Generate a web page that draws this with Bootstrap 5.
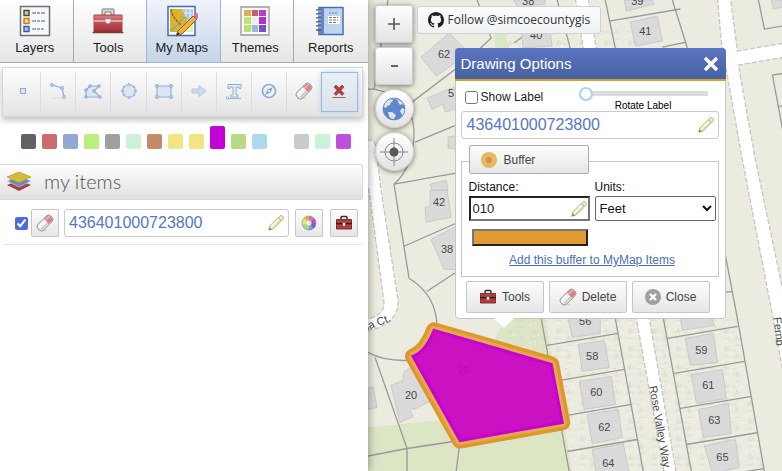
<!DOCTYPE html>
<html lang="en">
<head>
<meta charset="utf-8">
<meta name="viewport" content="width=device-width, initial-scale=1">
<title>My Maps</title>
<link href="https://cdn.jsdelivr.net/npm/bootstrap@5.3.0/dist/css/bootstrap.min.css" rel="stylesheet">
<style>
body{font-family:"Liberation Sans",Arial,sans-serif;font-size:12px;line-height:16px;color:#222;background:#fff}
button,input,select{font-family:inherit}
.side-panel{width:47%;max-width:368px;background:#fff;box-shadow:1px 0 8px rgba(0,0,0,.35);z-index:2}
.main-tabs{display:grid;grid-template-columns:repeat(5,1fr)}
.main-tab{height:63px;border:0;border-right:1px solid #a9a9a9;border-bottom:1px solid #a9a9a9;background:linear-gradient(#fefefe,#e6e6e6);font-size:13px;line-height:16px;color:#1c1c1c;padding:0 3px 2px 0}
.main-tab:last-child{border-right:0;padding-right:0}
.main-tab svg{display:block;margin:0 auto 3px;width:32px;height:32px}
.main-tab.is-on{background:linear-gradient(#eff4fc,#c5d4e7);border-color:#9db6da;box-shadow:-1px 0 #9db6da}
.draw-bar{height:50px;margin:4px 5px 0 2px;padding:4px 4px 4px 3px;border:1px solid #d6d6d6;background:linear-gradient(#fdfdfd,#e3e4e3);box-shadow:0 3px 6px rgba(0,0,0,.25)}
.draw-bar button{flex:1 1 0;border:0;border-right:1px solid #dcdedd;background:none;padding:0 0 2px}
.draw-bar button:nth-child(9){border-right:0}
.draw-bar button.is-on{border:1px solid #9bb9e4;background:linear-gradient(#e8eff8,#dce2e8);box-shadow:0 0 5px #b9cdea}
.draw-bar svg{width:20px;height:20px}
.swatches{height:47px;gap:6px;padding:0 0 15px 21px}
.swatch{width:15px;height:15px;border:0;border-radius:2px;padding:0}
.swatch.is-on{height:23px}
.items-head{height:36px;margin-right:5px;padding:0 0 3px 6px;gap:12px;border:1px solid #d8d8d8;border-left:0;border-radius:0 3px 3px 0;background:linear-gradient(#fefefe,#dfe0df)}
.items-head h1{font:300 20px/24px Lato,sans-serif;color:#555;margin:0}
.item-row{margin:0 6px 0 4px;padding:9px 4px 7px 11px;gap:3px;border-bottom:1px solid #e8e8e8}
.tick{width:13px;height:13px;margin:0;accent-color:#4c6de0;flex:none}
.soft-btn{border:1px solid #c4c6c7;border-radius:2px;background:linear-gradient(#fdfdfd,#e5e6e5);color:#444;padding:0;display:flex;align-items:center;justify-content:center}
.mini-btn{width:28px;height:28px;flex:none}
.field{border:1px solid #c9cbcc;border-radius:3px;background:#fff;display:flex;align-items:center;padding:0 4px 0 5px;height:28px}
.item-row .field{margin:0 3px 0 2px;padding-left:4px}
.field input{border:0;outline:0;padding:0;flex:1;min-width:0;width:0;font-size:16px;line-height:20px;color:#5578c0;background:none}
.map{position:relative;flex:1;min-width:0;background:#ecebdf;overflow:hidden}
.map-art{position:absolute;inset:0;width:100%;height:100%}
.map-controls{position:absolute;left:7px;top:5px}
.zoom-btn{width:38px;height:38px;border:1px solid #ccc;border-radius:3px;background:linear-gradient(#fff,#e2e2e2);box-shadow:0 1px 5px rgba(0,0,0,.5);padding:0}
.zoom-btn svg,.round-btn svg{display:block;margin:auto}
.round-btn{width:39px;height:39px;border:1px solid #ccc;border-radius:50%;background:linear-gradient(#fff,#e2e2e2);box-shadow:0 1px 5px rgba(0,0,0,.5);padding:0}
.follow{position:absolute;left:49px;top:6px;height:28px;padding:0 10px;gap:4px;border:1px solid #cfd3d6;border-radius:3px;background:linear-gradient(#fcfcfc,#eff1f4);color:#333;text-decoration:none;font:500 12px/20px "Open Sans",sans-serif}
.popup{position:absolute;left:87px;top:48px;width:271px;background:#fff;border:1px solid #c6c6c6;border-radius:4px;z-index:1}
.popup:after{content:"";position:absolute;left:38px;top:100%;border:10px solid transparent;border-top-color:#fff;border-bottom:0}
.popup-head{height:33px;margin:-1px -1px 0;padding:0 7px 0 6px;border-radius:4px 4px 0 0;background:linear-gradient(#5a74c4,#47619f);border-bottom:2px solid #d3a02d;color:#fff}
.popup-head h2{font-size:15px;line-height:20px;margin:0;font-weight:400}
.popup-head button{border:0;background:none;padding:0;line-height:0}
.popup-body{padding:6px 6px 5px 5px}
.show-row{padding:2px 0 0 4px;gap:3px}
.rotate{width:129px;margin-right:11px}
.rotate input{appearance:none;display:block;width:100%;height:14px;margin:0;background:linear-gradient(#dcdcdc,#dcdcdc) 6px 4px/100% 5px no-repeat}
.rotate input::-webkit-slider-thumb{appearance:none;width:14px;height:14px;border:2px solid #a9d5e8;border-radius:50%;background:#fff}
.rotate label{font-size:10px;line-height:10px;color:#000}
.buffer-box{border:1px solid #c4c6c7;margin-top:22px;padding:0 2px 0 7px;height:116px}
.buffer-btn{width:120px;height:29px;margin-top:-17px;border-color:#aaacad;justify-content:flex-start;padding-left:10px;gap:6px;font-size:12px}
.pair{display:grid;grid-template-columns:121px 1fr;column-gap:5px;margin-top:4px}
.pair label{line-height:18px;color:#111}
.dist{height:25px;border:2px solid #777;border-top-color:#222;border-left-color:#222;display:flex;align-items:center;padding:0 1px 0 2px}
.dist input{border:0;outline:0;padding:0;flex:1;width:0;min-width:0;font-size:13px;line-height:18px;color:#222}
.unit{height:25px;border:1px solid #666;border-radius:2px;background:#fff;font-size:13px;line-height:20px;padding:0;width:100%;color:#111}
.hue{display:block;width:116px;height:17px;margin:8px 0 0 3px;padding:0;border:2px solid #222;border-top-color:#777;border-left-color:#777;background:#e39b31}
.add-link{display:block;text-align:center;margin-top:6px;color:#4a6fb5}
.acts{display:grid;grid-template-columns:repeat(3,78px);gap:5px;margin:4px 0 0 5px}
.acts button{height:32px;gap:5px;font-size:12px;line-height:16px}
</style>
<script src="https://cdn.jsdelivr.net/npm/bootstrap@5.3.0/dist/js/bootstrap.bundle.min.js"></script>
</head>
<body>
<svg width="0" height="0" class="position-absolute" aria-hidden="true">
<defs>
<linearGradient id="gr" x1="0" y1="0" x2="0" y2="1"><stop offset="0" stop-color="#d98087"/><stop offset=".5" stop-color="#ba4b52"/><stop offset="1" stop-color="#a93439"/></linearGradient>
</defs>
<symbol id="i-box" viewBox="0 0 32 32"><path d="M10 10V5q0-1 1-1h10q1 0 1 1v5h-3V7h-6v3z" fill="#d8dada" stroke="#777"/><path d="M2 10h28v16H2z" fill="url(#gr)" stroke="#a84047"/><path d="M1 15h30v2H1z" fill="#e6a5a8"/><path d="M0 28l3-3h26l3 3z" fill="#8d3437"/><path d="M1 28.500h30" stroke="#c9c9c9"/><path d="M13 14h6v3l-3 2-3-2z" fill="#eee" stroke="#999" stroke-width=".7"/></symbol>
<symbol id="i-kit" viewBox="0 0 18 16"><path d="M6 5V2.500Q6 1.500 7 1.500h4q1 0 1 1V5" fill="none" stroke="#333" stroke-width="1.500"/><path d="M1.500 4.500h15v4h-15zM1.500 9h15v5h-15z" fill="#b53b3c" stroke="#8b2b2a"/><path d="M1 8.500h16" stroke="#2f2020" stroke-width="1.200"/><path d="M7.500 7.500h3v3l-1.500 1-1.500-1z" fill="#ddd" stroke="#555" stroke-width=".6"/></symbol>
<symbol id="i-erase" viewBox="0 0 18 18"><path d="M2 16.500h9" stroke="#d4d4d4" stroke-width="1.500"/><g transform="rotate(-45 9 9)"><rect x="0" y="5" width="18" height="8" rx="3" fill="#eeeded" stroke="#8d8a8a" stroke-width=".9"/><path d="M11 5.500h4q2.500 0 2.500 2.500v2q0 2.500-2.500 2.500h-4z" fill="#d98184"/><path d="M11 7.500h6" stroke="#f0b9ba" stroke-width="1.500"/><path d="M2 7.500h9" stroke="#fff" stroke-width="1.500"/><path d="M2 11h9" stroke="#c9c6c6" stroke-width="1.500"/></g></symbol>
<symbol id="i-pencil" viewBox="0 0 16 16"><g transform="rotate(-45 8 8)"><path d="M-2 8l3.500-2.300H15q2.500 0 2.500 2.300T15 10.300H1.500z" fill="#f1eebb" stroke="#b3b08c" stroke-width=".9"/><path d="M2 7.500h11" stroke="#fffef0" stroke-width="1.300"/><path d="M2 9.200h11" stroke="#dcd78f" stroke-width="1"/><path d="M-2.500 8l3-1.800v3.600z" fill="#8c8c80"/><path d="M13.500 6v4" stroke="#b5b5a5"/></g></symbol>
</svg>

<div class="d-flex min-vh-100">
<aside class="side-panel flex-shrink-0">
<nav class="main-tabs" aria-label="Sections">
<button class="main-tab"><svg viewBox="0 0 32 32"><path d="M1.500 1.500h29v29h-29z" fill="#f8f8f8" stroke="#6b6f78" stroke-width="1.500"/><g stroke-width="1.400"><path d="M5 5.500h5v5H5z" fill="#bfda7d" stroke="#444"/><path d="M5 13.500h5v5H5z" fill="#f7db72" stroke="#c6791b"/><path d="M5 21.500h5v5H5z" fill="#a5bff1" stroke="#3a5ca7"/></g><path d="M13 8h14M13 16h14M13 24h12" stroke="#435f98" stroke-dasharray="4 1 3 1"/></svg>Layers</button>
<button class="main-tab"><svg><use href="#i-box"/></svg>Tools</button>
<button class="main-tab is-on"><svg viewBox="0 0 32 32"><path d="M2 1.500h27v29H2z" fill="#fff" stroke="#4469b4" stroke-width="1.500"/><path d="M4 4h12l6 10-4 13H4z" fill="#d3b72d"/><path d="M16 4h11v10l-6 1z" fill="#a9c7f4"/><path d="M18 27l4-9 5-1v10z" fill="#e0efb1"/><path d="M18 8h8M20 4v8M24 4v9" stroke="#fff" stroke-width=".7"/><path d="M5 4q1 7 6 12l4 4" fill="none" stroke="#c03f29" stroke-dasharray="3 1" stroke-width="1.300"/><path d="M4 25q7-2 10-8t7-4" fill="none" stroke="#6e9ad5"/><path d="M10 31l2-5 15-15 4 3-15 15z" fill="#edb04b" stroke="#9c5b20"/><path d="M28 10l2-2q3 0 3 4l-2 2z" fill="#dd6e91"/><path d="M10 31l2-4 2 2z" fill="#333"/></svg>My Maps</button>
<button class="main-tab"><svg viewBox="0 0 32 32"><path d="M2 2h28v28H2z" fill="#fafafa" stroke="#999" stroke-width="1.300"/><path d="M5 5h7v6H5z" fill="#dfab5d"/><path d="M13 5h6v6h-6z" fill="#c9605f"/><path d="M20 5h7v6h-7z" fill="#b93ccc"/><path d="M5 12h7v7H5z" fill="#bde66e"/><path d="M13 12h6v7h-6z" fill="#eee"/><path d="M20 12h7v7h-7z" fill="#b82dcf"/><path d="M5 20h7v7H5z" fill="#b3e56c"/><path d="M13 20h6v7h-6z" fill="#9bb7dd"/><path d="M20 20h7v7h-7z" fill="#7652c7"/></svg>Themes</button>
<button class="main-tab"><svg viewBox="0 0 32 32"><path d="M4 2.500h24v27H4z" fill="#bfd5ec" stroke="#486fb6" stroke-width="1.500"/><path d="M4 3h5v26H4z" fill="#5f86c8"/><path d="M1 5h5M1 9h5M1 13h5M1 17h5M1 21h5M1 25h5" stroke="#4d5970" stroke-width="1.700"/><path d="M1 6h5M1 10h5M1 14h5M1 18h5M1 22h5" stroke="#fff" stroke-width=".6"/><path d="M13 11h12v8H13z" fill="#fff"/><path d="M14 8h9" stroke="#5879b8" stroke-dasharray="2 1"/><path d="M14 12.500h9M14 15h9M14 17.500h7" stroke="#777" stroke-dasharray="3 1"/></svg>Reports</button>
</nav>

<div class="draw-bar d-flex" role="toolbar" aria-label="Drawing tools">
<button aria-label="Point"><svg viewBox="0 0 20 20"><path d="M7.500 7.500h5v5h-5z" fill="#dce7f2" stroke="#91addb" stroke-width="1.200"/></svg></button>
<button aria-label="Line"><svg viewBox="0 0 20 20"><g fill="#f6f9fc" stroke="#91addb" stroke-width="1.200"><path d="M4 4l10 3 2 9" fill="none"/><circle cx="4" cy="4" r="1.300"/><circle cx="14" cy="7" r="1.300"/><circle cx="16" cy="16" r="1.300"/></g><path d="M4 17h10" stroke="#ddd"/></svg></button>
<button aria-label="Polygon"><svg viewBox="0 0 20 20"><g fill="#dce6f3" stroke="#91addb" stroke-width="1.200"><path d="M7 5h9l-5 5 6 6H3V9z"/><circle cx="7" cy="5" r="1.200"/><circle cx="16" cy="5" r="1.200"/><circle cx="11" cy="10" r="1.200"/><circle cx="17" cy="16" r="1.200"/><circle cx="3" cy="16" r="1.200"/><circle cx="3" cy="9" r="1.200"/></g></svg></button>
<button aria-label="Circle"><svg viewBox="0 0 20 20"><g fill="#dce6f3" stroke="#91addb" stroke-width="1"><circle cx="10" cy="10" r="6.500"/><circle cx="10" cy="3.500" r="1"/><circle cx="10" cy="16.500" r="1"/><circle cx="3.500" cy="10" r="1"/><circle cx="16.500" cy="10" r="1"/><circle cx="5" cy="6" r=".8"/><circle cx="15" cy="6" r=".8"/><circle cx="5" cy="14" r=".8"/><circle cx="15" cy="14" r=".8"/></g></svg></button>
<button aria-label="Rectangle"><svg viewBox="0 0 20 20"><g fill="#dce6f3" stroke="#91addb" stroke-width="1.200"><path d="M3 5h14v11H3z"/><circle cx="3" cy="5" r="1.300"/><circle cx="17" cy="5" r="1.300"/><circle cx="3" cy="16" r="1.300"/><circle cx="17" cy="16" r="1.300"/></g></svg></button>
<button aria-label="Arrow"><svg viewBox="0 0 20 20"><path d="M3 8h7V4.500l7 5.500-7 5.500V12H3z" fill="#ccdceb" stroke="#b5c9e2"/></svg></button>
<button aria-label="Text"><svg viewBox="0 0 20 20"><path d="M4 3.500h13v4h-2V6h-3v8h2v2H7v-2h2V6H6v1.500H4z" fill="#eaf0f8" stroke="#91addb"/><path d="M4 17.500h13" stroke="#91addb"/><circle cx="3.500" cy="17" r="1.300" fill="#fff" stroke="#91addb"/></svg></button>
<button aria-label="Compass"><svg viewBox="0 0 20 20"><circle cx="10" cy="10" r="6.500" fill="#eef2f8" stroke="#91addb" stroke-width="1.700"/><path d="M14 6l-2.500 5.500L6 14l2.500-5.500z" fill="#83a6db"/><circle cx="10" cy="10" r="1" fill="#fff"/></svg></button>
<button aria-label="Eraser"><svg viewBox="0 0 20 20"><use href="#i-erase" x="1" y="1" width="18" height="18"/></svg></button>
<button class="is-on" aria-label="Delete all"><svg viewBox="0 0 20 20"><path d="M5 6l2-2 3 3 3-3 2 2-3 3.500 3 3-2 2-3-3-3 3-2-2 3-3z" fill="#b93a37" stroke="#8d3735" stroke-width=".6"/><path d="M3.500 16.500h13" stroke="#bb5550"/></svg></button>
</div>

<div class="swatches d-flex align-items-end" id="swatches"></div>

<div class="items-head d-flex align-items-center">
<svg width="26" height="24" viewBox="0 0 26 24"><path d="M1 16l12-5 12 5-12 6z" fill="#a84144"/><path d="M1 12l12-5 12 5-12 6z" fill="#648ccc" stroke="#d4def0" stroke-width=".6"/><path d="M1 8l12-5 12 5-12 6z" fill="#d2bd3a" stroke="#a58f22" stroke-width=".6"/></svg>
<h1>my items</h1>
</div>

<div class="item-row d-flex align-items-center">
<input class="tick" type="checkbox" checked aria-label="Show item">
<button class="soft-btn mini-btn" aria-label="Delete item"><svg width="18" height="18"><use href="#i-erase"/></svg></button>
<div class="field flex-grow-1"><input type="text" value="436401000723800" aria-label="Item name"><svg width="16" height="16"><use href="#i-pencil"/></svg></div>
<button class="soft-btn mini-btn me-1" aria-label="Item colour"><svg width="16" height="16" viewBox="0 0 16 16"><path d="M8 8V1a7 7 0 0 1 5 2z" fill="#d87974"/><path d="M8 8l5-5a7 7 0 0 1 2 5z" fill="#bd50ce"/><path d="M8 8h7a7 7 0 0 1-3 6z" fill="#7464cb"/><path d="M8 8l4 6a7 7 0 0 1-5 1z" fill="#72a9cd"/><path d="M8 8l-1 7a7 7 0 0 1-6-6z" fill="#a6df7b"/><path d="M8 8L1 9a7 7 0 0 1 2-6z" fill="#e2e277"/><path d="M8 8L3 3a7 7 0 0 1 5-2z" fill="#e1ac63"/><circle cx="8" cy="8" r="2.500" fill="#fff" opacity=".75"/><circle cx="8" cy="8" r="7" fill="none" stroke="#888" stroke-width=".6"/></svg></button>
<button class="soft-btn mini-btn" aria-label="Item tools"><svg width="18" height="16"><use href="#i-kit"/></svg></button>
</div>
</aside>

<main class="map">
<svg class="map-art" viewBox="368 0 414 471" preserveAspectRatio="xMinYMin slice" role="img" aria-label="Parcel map">
<defs><pattern id="veg" width="24" height="18" patternUnits="userSpaceOnUse"><path d="M3 6l2 3 1-5 1 5 3-4M13 14l3 2 0-5 2 5 3-3M15 3h5M2 14h7M12 8h4" fill="none" stroke="#d3d8c6" stroke-width=".7"/><path d="M1 1h2M9 11h2M20 8h2M18 5h1M6 17h2" stroke="#f8f8f0"/></pattern></defs>
<path d="M368 0h414v471H368z" fill="#ecebdf"/>
<path d="M368 427l87-9 50-100h40l27 153H368zM494 30h11l4 18h-14z" fill="#dce5c4"/>
<g fill="url(#veg)"><path d="M545 318h191l28 153H576zM510 318h34l17 60-54-20zM510 30h130v18H500z"/></g>
<g fill="#fff" stroke="#c6c6c6" stroke-dasharray="5 2" stroke-width="1.300">
<path d="M360 140h10q5 0 6 8l5 42 17 110q1 26-38 32v-12q25-3 24-18l-15-112-9-25"/>
<path d="M575 -2l8 50 53 270 28 155h12l-27-155L596 48l-8-50z"/>
<path d="M717 -2l4 44 21 118 33 170 9 50V298l-29-138-17-95 46-8V43l-47 8-7-53z"/>
</g>
<g fill="none" stroke="#999a99" stroke-width="1.300">
<path d="M388 0l-14 90M360 89h14q39 8 40 42 0 35-20 53l15 94q28 17 28 50M394 184l62-11M415 142l41-17M412 102l58-44 21-20-14-38M404 246l52-23M427 291l29-19M360 347q18 14 48 13M375 357l32 91M360 457l47-9 53-8M407 448v23M460 440l-4 31M557 0l13 48M605 0l10 48M609 21l71-12M672 0l15 48M662 47l24-5M534 28l-20 15"/>
<path d="M541 318l28 153M547 345l71-12M560 380l64-11M567 415l64-11M567 451l70-12M615 318l28 153M663 318l28 153M737 318l27 153M667 338l70-12M674 373l70-12M680 408l71-12M686 444l72-12M690 480l74-12M725 255l12 63M725 292l7-1M758 0l6 29 18-3M784 73l-12 2 12 64M777 106h6"/>
</g>
<g fill="#dadada" stroke="#c3c3c3" stroke-width=".8">
<path d="M421 57l28-24 20 20-33 23zM427 98l30-12v22l-12 4-2-8-11 5zM448 137l10-2v14l-10-1zM430 184l16-4 2 10h-16zM430 190h17l4 27-25 5-1-15 5-1zM431 239l25-13v43l-12 0zM391 385l12-5 1-9 10-5 20 33-20 10-1-2-3 3 3 6-13 6zM368 388l5-2 4 21-9 2zM513 0h32v4l-27 3zM521 32h29l2 14-29 2zM624 0h28l2 4-28 7zM630 22l27-6 5 25-27 5z"/>
<path d="M568 318h32v15l-28 4zM578 344l26-4 5 27-27 4zM579 381l32-5 4 28-31 5zM587 414l31-5 4 28-30 6zM592 449l31-6 6 30h-33zM680 318h31l3 7-32 5zM685 338l28-5 4 29-27 3zM691 374l31-5 4 29-30 5zM698 409l30-6 3 30-28 4zM704 445l31-6 4 28-27 6zM771 0h11v7l-9 2z"/>
</g>
<g font-family="Liberation Sans" font-size="11" fill="#484848" text-anchor="middle">
<text x="444" y="58">62</text><text x="451" y="97">5</text><text x="439" y="206">42</text><text x="447" y="253">38</text><text x="411" y="399">20</text><text x="528" y="5">38</text><text x="536" y="39">40</text><text x="637" y="5">39</text><text x="645" y="35">41</text><text x="585" y="325">56</text><text x="592" y="360">58</text><text x="596" y="396">60</text><text x="604" y="431">62</text><text x="608" y="466">64</text><text x="701" y="354">59</text><text x="708" y="389">61</text><text x="714" y="424">63</text><text x="722" y="460">65</text>
<text transform="translate(660 426) rotate(80)" y="4">Rose Valley Way</text>
<text transform="translate(775 317) rotate(84)" y="2" text-anchor="start">Fernb</text>
<text transform="translate(377 324) rotate(-21)" y="2">na Ct.</text>
</g>
<path d="M434 330L551 364l11 58-102 18-47-84q13-5 21-26z" fill="none" stroke="#e0962c" stroke-width="16" stroke-linejoin="round"/>
<path d="M434 330L551 364l11 58-102 18-47-84q13-5 21-26z" fill="none" stroke="#dfac4d" stroke-width="9" stroke-linejoin="round"/>
<path d="M434 330L551 364l11 58-102 18-47-84q13-5 21-26z" fill="#cb12c3" stroke="#c800d2" stroke-width="3"/>
<text x="463" y="374" text-anchor="middle" font-family="Liberation Sans" font-size="11" fill="#b60bb5">26</text>
</svg>

<div class="map-controls d-flex flex-column">
<button class="zoom-btn" aria-label="Zoom in"><svg width="14" height="14"><path d="M7 1v12M1 7h12" stroke="#555" stroke-width="1.600"/></svg></button>
<button class="zoom-btn mt-1" aria-label="Zoom out"><svg width="14" height="14"><path d="M4 7h7" stroke="#555" stroke-width="1.800"/></svg></button>
<button class="round-btn mt-1" aria-label="Full extent"><svg width="24" height="24" viewBox="0 0 24 24"><circle cx="12" cy="12" r="11" fill="#5c88cd"/><path d="M3 6q3-4 7-4l1 2-2 1-1 3-3 1-1 2-2-1zM15 2q5 2 7 6l-2-1-2 1-2-3zM6 15l4 0 4 3-2 4q-4 0-5-3zM20 11l3 1q0 4-3 6l-2-4z" fill="#e0e3e4"/><path d="M7 3q6-3 11 1" fill="none" stroke="#9dbbe8"/><circle cx="12" cy="12" r="11" fill="none" stroke="#527bb8" stroke-width=".6"/></svg></button>
<button class="round-btn mt-1" aria-label="Locate me"><svg width="28" height="28" viewBox="0 0 28 28"><g fill="none" stroke="#888"><circle cx="14" cy="14" r="9"/><path d="M14 0v28M0 14h28"/></g><circle cx="14" cy="14" r="4.500" fill="#555a5c"/></svg></button>
</div>

<a class="follow d-flex align-items-center" href="#"><svg width="16" height="16" viewBox="0 0 16 16"><path fill="#222" d="M8 0C3.580 0 0 3.580 0 8c0 3.540 2.290 6.530 5.470 7.590.4.070.55-.17.550-.38 0-.19-.01-.82-.01-1.490-2.010.37-2.530-.49-2.690-.94-.09-.23-.48-.94-.82-1.130-.28-.15-.68-.52-.01-.53.630-.01 1.080.58 1.230.82.720 1.210 1.870.87 2.330.66.070-.52.280-.87.510-1.070-1.780-.2-3.640-.89-3.640-3.950 0-.87.310-1.590.82-2.150-.08-.2-.36-1.020.08-2.120 0 0 .67-.21 2.200.82.640-.18 1.320-.27 2-.27s1.360.09 2 .27c1.530-1.040 2.200-.82 2.200-.82.440 1.100.16 1.920.08 2.120.51.560.82 1.270.82 2.150 0 3.070-1.870 3.750-3.650 3.950.29.250.54.730.54 1.480 0 1.070-.01 1.930-.01 2.200 0 .21.150.46.550.38A8.010 8.010 0 0 0 16 8c0-4.420-3.580-8-8-8z"/></svg>Follow @simcoecountygis</a>

<section class="popup" aria-label="Drawing Options">
<header class="popup-head d-flex align-items-center justify-content-between"><h2>Drawing Options</h2><button aria-label="Close options"><svg width="16" height="16"><path d="M2 2l12 12M14 2L2 14" stroke="#fff" stroke-width="3.400"/></svg></button></header>
<div class="popup-body">
<div class="d-flex justify-content-between align-items-start">
<div class="show-row d-flex align-items-center"><input type="checkbox" class="tick" id="show"><label for="show">Show Label</label></div>
<div class="rotate d-flex flex-column align-items-center"><input type="range" id="rot" value="0" min="0" max="360"><label for="rot">Rotate Label</label></div>
</div>
<div class="field"><input type="text" value="436401000723800" aria-label="Label text"><svg width="16" height="16"><use href="#i-pencil"/></svg></div>
<div class="buffer-box">
<button class="soft-btn buffer-btn"><svg width="18" height="18"><circle cx="9" cy="9" r="8" fill="#e5b95e"/><circle cx="9" cy="9" r="3" fill="#cc9062"/></svg>Buffer</button>
<div class="pair"><label for="dist">Distance:</label><label for="unit">Units:</label>
<div class="dist"><input id="dist" type="text" value="010"><svg width="16" height="16"><use href="#i-pencil"/></svg></div>
<select id="unit" class="unit"><option>Feet</option><option>Metres</option></select></div>
<button class="hue" aria-label="Buffer colour"></button>
<a class="add-link" href="#">Add this buffer to MyMap Items</a>
</div>
<div class="acts">
<button class="soft-btn"><svg width="18" height="16"><use href="#i-kit"/></svg>Tools</button>
<button class="soft-btn"><svg width="18" height="18"><use href="#i-erase"/></svg>Delete</button>
<button class="soft-btn"><svg width="16" height="16"><circle cx="8" cy="8" r="8" fill="#a0a0a0"/><path d="M5 5l6 6M11 5l-6 6" stroke="#fff" stroke-width="2.400"/></svg>Close</button>
</div>
</div>
</section>
</main>
</div>
<script>
const colours=['#616263','#cb6a71','#94a8d4','#bbef7d','#9f9f9f','#cbf2d8','#c38a6b','#f2e481','#f2e481','#c400d9','#b8da86','#acdaed','','#c9cbcb','#cbf2d8','#bb52d8'];
document.getElementById('swatches').innerHTML=colours.map((c,i)=>c?`<button class="swatch${i===9?' is-on':''}" style="background:${c}" aria-label="Colour ${c}"></button>`:'<span class="swatch"></span>').join('');
</script>
</body>
</html>
